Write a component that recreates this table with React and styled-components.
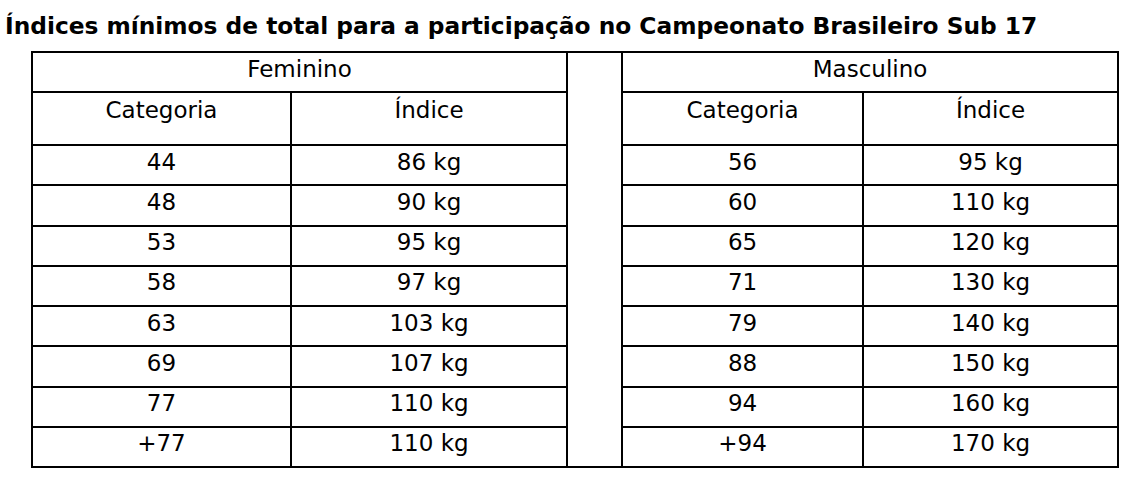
import styled, { createGlobalStyle } from 'styled-components';

const GlobalStyle = createGlobalStyle`
  body {
    margin: 0;
    background: #ffffff;
    color: #000000;
    font-family: "DejaVu Sans", Verdana, sans-serif;
  }
`;

const Page = styled.div`
  padding: 12px 0 0 5px;
`;

const Title = styled.h1`
  margin: 0 0 12px 0;
  font-size: 23.3px;
  font-weight: bold;
  line-height: normal;
  white-space: nowrap;
`;

const Table = styled.table`
  margin-left: 26px;
  border-collapse: collapse;
  table-layout: fixed;
  width: 1086px;
  font-size: 23px;
`;

const Col = styled.col`
  width: ${(p) => p.$w}px;
`;

const Row = styled.tr`
  height: ${(p) => p.$h}px;
`;

const Cell = styled.td`
  border: 2px solid #000;
  text-align: center;
  vertical-align: top;
  padding: ${(p) => p.$top || 2.5}px 0 0 0;
  line-height: normal;
`;

const Gap = styled.td`
  border: 2px solid #000;
  padding: 0;
`;

const feminino = [
  ['44', '86 kg'],
  ['48', '90 kg'],
  ['53', '95 kg'],
  ['58', '97 kg'],
  ['63', '103 kg'],
  ['69', '107 kg'],
  ['77', '110 kg'],
  ['+77', '110 kg'],
];

const masculino = [
  ['56', '95 kg'],
  ['60', '110 kg'],
  ['65', '120 kg'],
  ['71', '130 kg'],
  ['79', '140 kg'],
  ['88', '150 kg'],
  ['94', '160 kg'],
  ['+94', '170 kg'],
];

export default function App() {
  return (
    <Page>
      <GlobalStyle />
      <Title>Índices mínimos de total para a participação no Campeonato Brasileiro Sub 17</Title>
      <Table>
        <colgroup>
          <Col $w={259} />
          <Col $w={276} />
          <Col $w={55} />
          <Col $w={241} />
          <Col $w={255} />
        </colgroup>
        <tbody>
          <Row $h={39.5}>
            <Cell colSpan={2}>Feminino</Cell>
            <Gap rowSpan={10} />
            <Cell colSpan={2}>Masculino</Cell>
          </Row>
          <Row $h={53.5}>
            <Cell $top={4}>Categoria</Cell>
            <Cell $top={4}>Índice</Cell>
            <Cell $top={4}>Categoria</Cell>
            <Cell $top={4}>Índice</Cell>
          </Row>
          {feminino.map((f, i) => (
            <Row $h={40.25} key={f[0]}>
              <Cell>{f[0]}</Cell>
              <Cell>{f[1]}</Cell>
              <Cell>{masculino[i][0]}</Cell>
              <Cell>{masculino[i][1]}</Cell>
            </Row>
          ))}
        </tbody>
      </Table>
    </Page>
  );
}
